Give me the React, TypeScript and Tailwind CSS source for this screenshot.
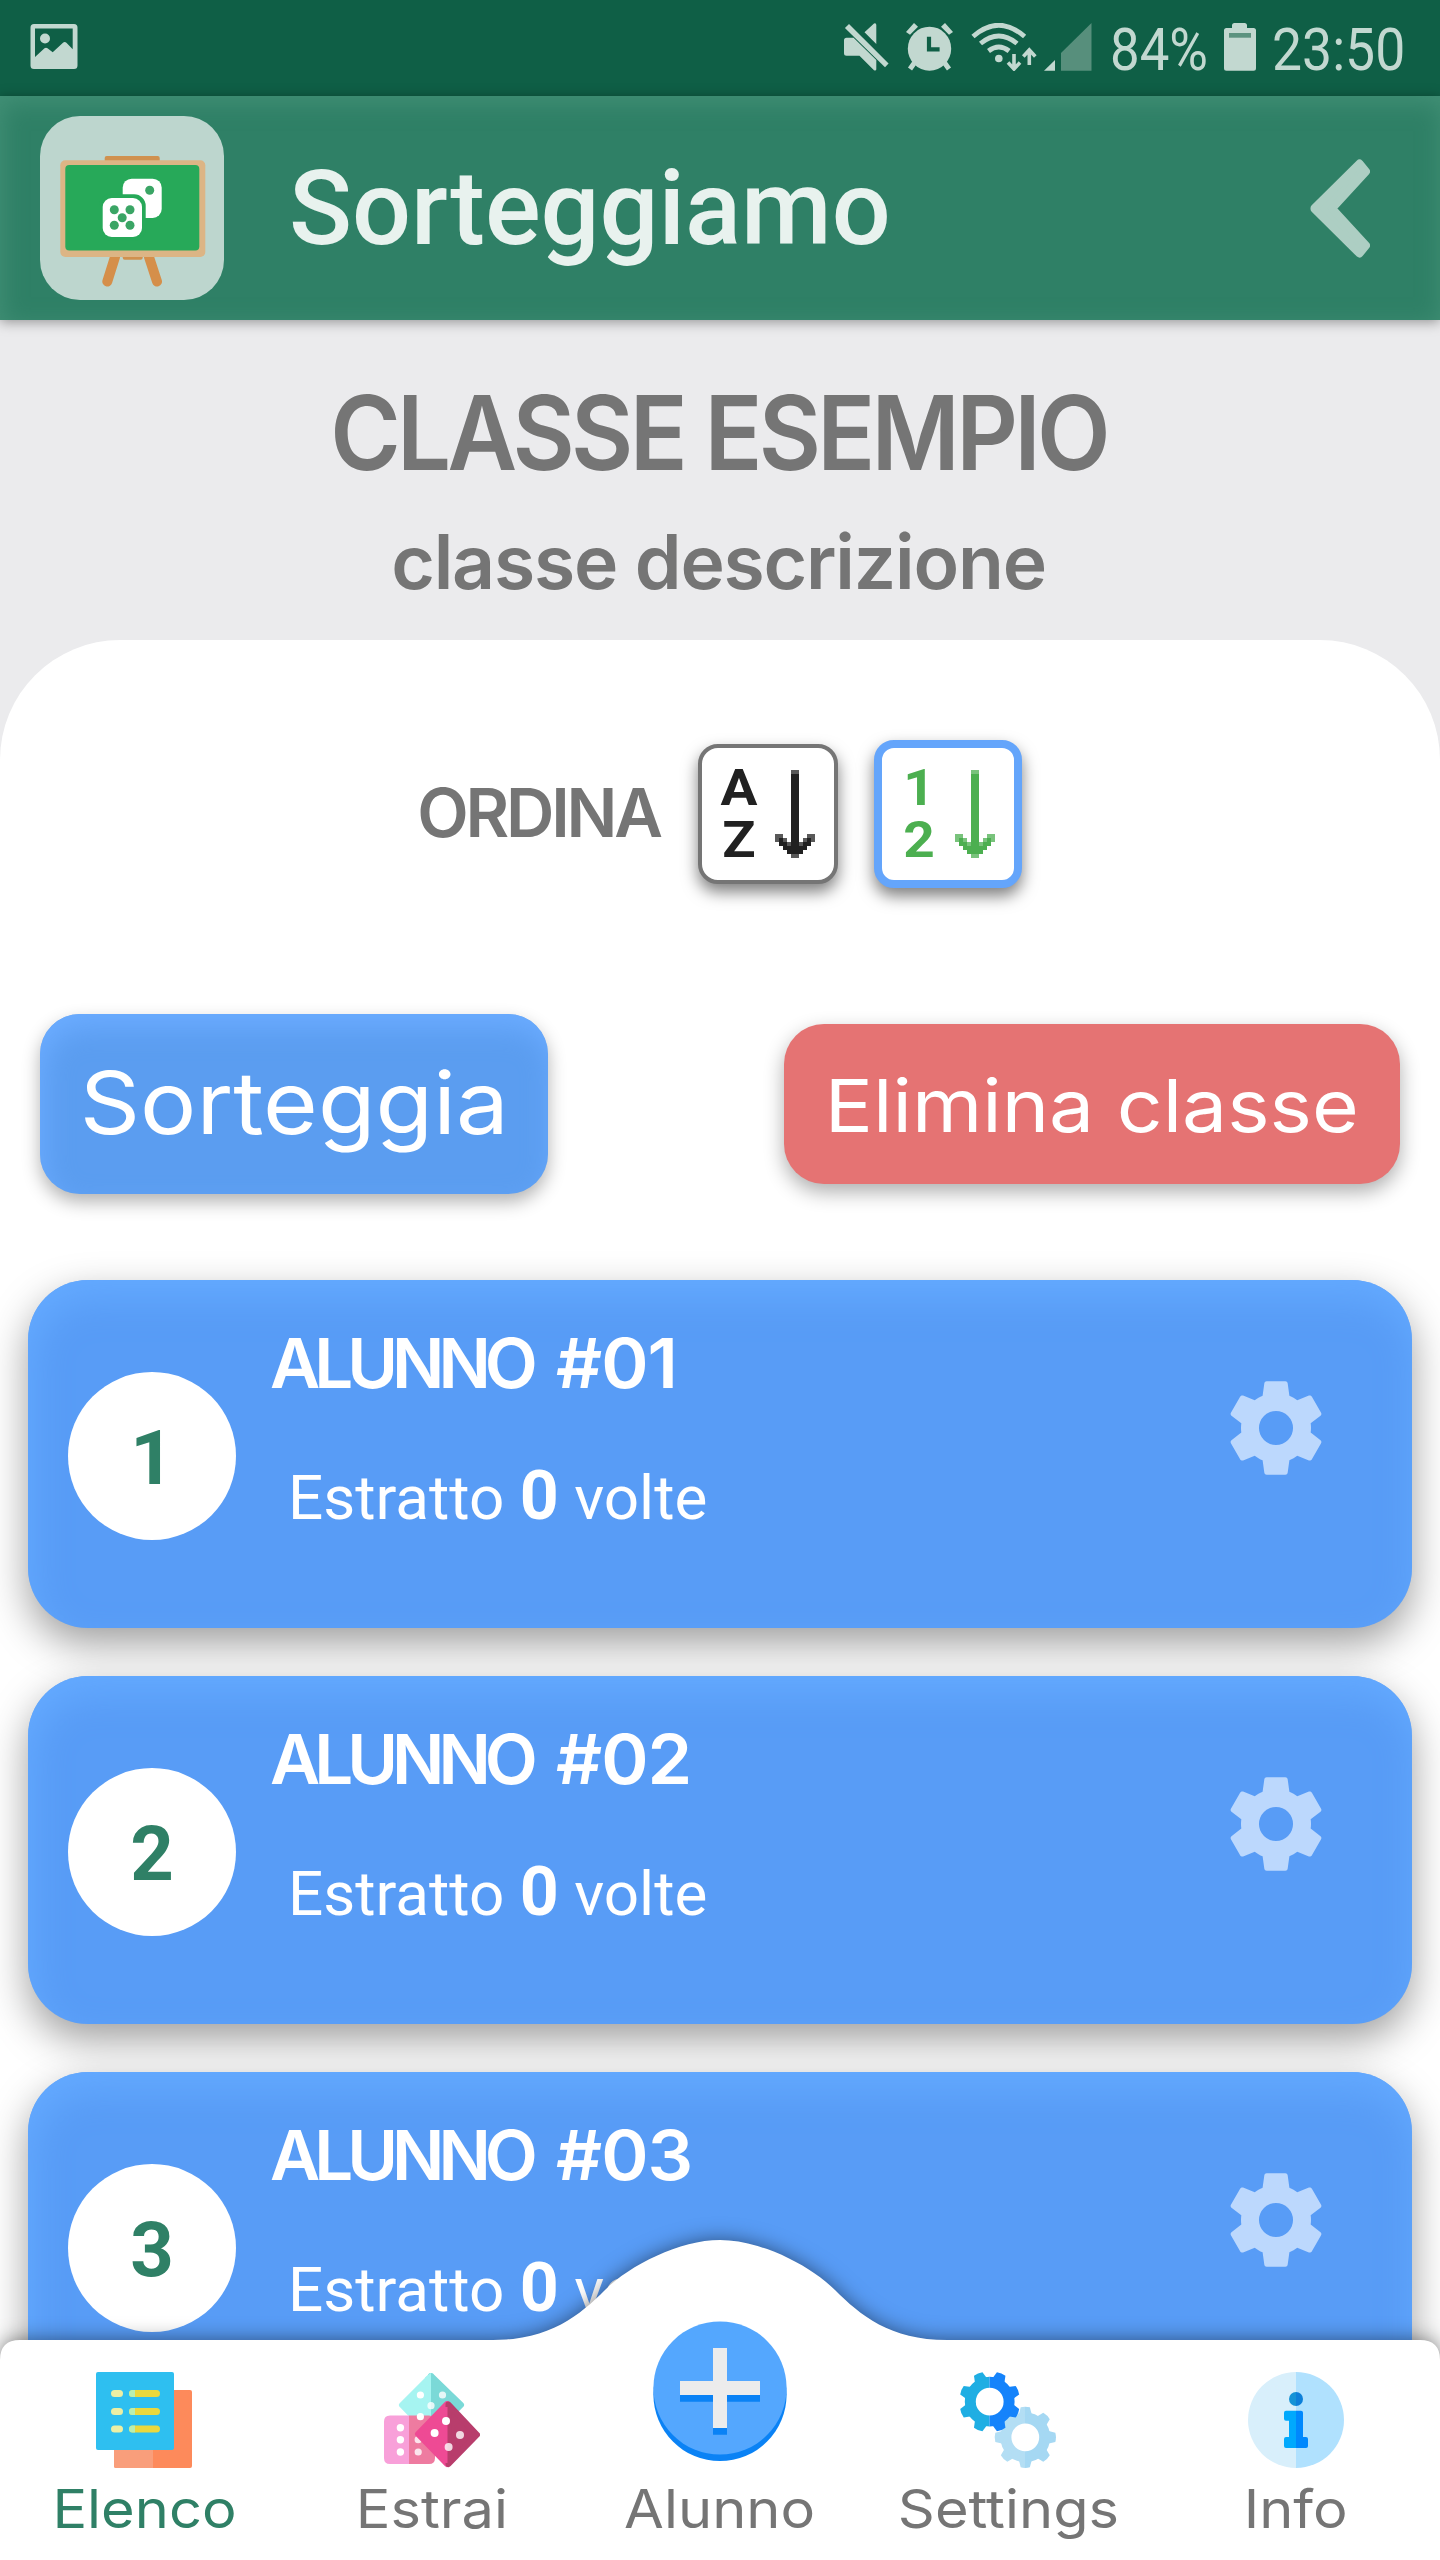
import type { ReactNode } from 'react'

interface StudentType {
    id : number
    code : string
    count : number
}

interface NavItemProps {
    label : string
    icon : ReactNode
    active? : boolean
}

const students : StudentType[] = [
    { id: 1, code: '#01', count: 0 },
    { id: 2, code: '#02', count: 0 },
    { id: 3, code: '#03', count: 0 },
]

// status bar
function StatusBar() {
    return (
        <div className="flex h-24 items-center justify-between bg-[#0f5f46] pl-[30px] pr-[34px] pb-0.5 text-[#c2d8d0]">
            <svg width="48" height="48" viewBox="0 0 48 48" fill="currentColor">
                <path fillRule="evenodd" d="M4 1h40a3.500 3.500 0 0 1 3.500 3.500v38a3.500 3.500 0 0 1-3.500 3.500H4A3.500 3.500 0 0 1 .5 42.500v-38A3.500 3.500 0 0 1 4 1ZM5 5.500V34l9.500-8.700q1.500-1.200 3 0l5.200 4L33 19.800q1.700-1.500 3.400 0l6.300 6.500V5.500Z" />
                <circle cx="15" cy="15.500" r="5" />
            </svg>

            <div className="flex items-center">
                {/* muted */}
                <svg className="mr-[17px]" width="45" height="48" viewBox="0 0 45 48" fill="currentColor">
                    <path d="M20.500 9.300 30 .5q2.300-.7 2.300 1.500v19ZM2.500 14.700h7L32.300 37v9.500q-.5 1.800-2.300.7L15.500 32.700h-13Q0 32.700 0 30.200v-13q0-2.500 2.500-2.500Z" />
                    <path d="M.9 5 5 1l39.600 39.500-3.600 3.800Z" />
                </svg>
                {/* alarm */}
                <svg className="mr-[17px]" width="48" height="48" viewBox="0 0 48 48" fill="currentColor">
                    <ellipse cx="23.500" cy="25.700" rx="21.700" ry="22" />
                    <path d="M0 9 8 0l4 3.800-8 8ZM47 9l-8-9-4 3.800 8 8Z" />
                    <path d="m9 39-5 7M38 39l5 7" stroke="currentColor" strokeWidth="5" />
                    <path d="M23 13.700v12.600h10.600" fill="none" stroke="#0f5f46" strokeWidth="4.200" />
                </svg>
                {/* wifi */}
                <svg className="mr-[7px]" width="66" height="48" viewBox="0 0 66 48" fill="none" stroke="currentColor">
                    <path d="M2 13.500Q27.800-9 53.600 13.500M9.500 20.500Q27.800 5.500 46 20.500M17.500 28q10.300-8 20.600 0" strokeWidth="4.800" />
                    <circle cx="27.800" cy="35.500" r="3.800" fill="currentColor" stroke="none" />
                    <path d="M43 31v14M37 39.500l6 6.500 6-6.500M58.300 42V28M52.300 33.500l6-6.500 6 6.500" strokeWidth="3.600" />
                </svg>
                {/* signal */}
                <svg className="mr-[18px]" width="48" height="48" viewBox="0 0 48 48">
                    <path d="M0 47.700 11 37v10.700Z" fill="#c2d8d0" />
                    <path d="M17 47.700V30L47.500 0v47.700Z" fill="#578f7c" />
                </svg>
                <div className="mr-[18px] w-24 origin-left scale-x-[0.88] whitespace-nowrap pt-1.5 font-['Roboto',sans-serif] text-[60px] leading-[64px]">84%</div>
                {/* battery */}
                <svg className="mr-4" width="32" height="48" viewBox="0 0 32 48" fill="currentColor">
                    <path d="M10.500 0h10q2.500 0 2.500 2.500V5h6.500Q32 5 32 7.500v37.700q0 2.500-2.500 2.500h-27Q0 47.700 0 45.200V7.500Q0 5 2.500 5H8V2.500Q8 0 10.500 0Z" />
                    <path d="M5 10h22v4.700H5Z" fill="#5c937f" />
                </svg>
                <div className="w-[134px] origin-left scale-x-[0.892] whitespace-nowrap pt-1.5 font-['Roboto',sans-serif] text-[60px] leading-[64px]">23:50</div>
            </div>
        </div>
    )
}

function Logo() {
    return (
        <svg className="rounded-[40px] bg-[#bdd6ce]" width="184" height="184" viewBox="0 0 184 184">
            <path d="M75 141 67.300 165.500M109 141l8 24.500" stroke="#d58f4a" strokeWidth="10" strokeLinecap="round" />
            <rect x="82.700" y="136" width="20" height="7.700" rx="2" fill="#d0914f" />
            <rect x="64.700" y="40" width="55" height="8" rx="2" fill="#d0914f" />
            <rect x="20.300" y="44.300" width="145" height="96.700" rx="5" fill="#dcb585" />
            <rect x="25.300" y="49" width="134" height="85.500" rx="4" fill="#27a959" />
            <rect x="82.700" y="62.700" width="39" height="39.300" rx="9" fill="#fff" />
            <circle cx="109.700" cy="74.300" r="4.500" fill="#3aa565" />
            <rect x="60.500" y="79.800" width="43.700" height="43.400" rx="10" fill="#27a959" stroke="#27a959" strokeWidth="3" />
            <rect x="62.700" y="82" width="39.300" height="39" rx="9" fill="#fff" />
            <g fill="#3aa565">
                <circle cx="74.300" cy="93.700" r="4.500" />
                <circle cx="90" cy="93.700" r="4.500" />
                <circle cx="82.200" cy="101.700" r="4.500" />
                <circle cx="74.300" cy="109.300" r="4.500" />
                <circle cx="90" cy="109.300" r="4.500" />
            </g>
        </svg>
    )
}

function Header() {
    return (
        <header className="relative z-10 flex h-56 items-center bg-[#2f8066] pl-10 pr-[70px] shadow-[0_2px_12px_rgba(0,0,0,0.38),inset_2px_6px_24px_rgba(80,155,130,0.6)]">
            <Logo />
            <h1 className="ml-[65px] grow pt-px font-['Roboto',sans-serif] text-[104px] leading-none font-medium text-[#e8f2ee]">Sorteggiamo</h1>
            <svg width="60" height="100" viewBox="0 0 60 100" fill="#adcec3" stroke="#adcec3" strokeWidth="8" strokeLinejoin="round">
                <path d="M4.500 50 49.500 5.500 56 13.500 22 50.500 56 87.500 49.500 95.500 4.500 51Z" />
            </svg>
        </header>
    )
}

// down arrow built from 4px cells
function PixelArrow() {
    return (
        <svg width="40" height="88" viewBox="0 0 10 22" fill="currentColor" shapeRendering="crispEdges">
            <path d="M4 1h2v20H4ZM1 17h1v1H1ZM2 18h1v1H2ZM1 18h2v1H1ZM2 19h6v1H2ZM3 20h4v1H3ZM7 18h2v1H7ZM8 17h1v1H8Z" />
            <path d="M4 0h2v1H4ZM0 16h2v1H0ZM8 16h2v1H8ZM0 17h1v1H0ZM9 17h1v1H9ZM2 17h1v1H2ZM7 17h1v1H7ZM3 18h1v1H3ZM6 18h1v1H6ZM4 21h2v1H4Z" opacity=".75" />
        </svg>
    )
}

function SortIcon({ top, bottom } : { top : string, bottom : string }) {
    return (
        <div className="flex items-center justify-center gap-[17px]">
            <div className="flex w-[38px] scale-x-110 flex-col pb-px text-center font-['Roboto',sans-serif] text-[50px] leading-[52px] font-bold">
                <span>{ top }</span>
                <span>{ bottom }</span>
            </div>
            <PixelArrow />
        </div>
    )
}

function GearIcon() {
    return (
        <svg width="112" height="112" viewBox="0 0 24 24" fill="#bcd8fd">
            <path d="M12,15.650A3.650,3.650 0 0,1 8.350,12A3.650,3.650 0 0,1 12,8.350A3.650,3.650 0 0,1 15.650,12A3.650,3.650 0 0,1 12,15.650M19.430,12.970C19.470,12.650 19.500,12.330 19.500,12C19.500,11.670 19.470,11.340 19.430,11L21.540,9.370C21.730,9.220 21.780,8.950 21.660,8.730L19.660,5.270C19.540,5.050 19.270,4.960 19.050,5.050L16.560,6.050C16.040,5.660 15.500,5.320 14.870,5.070L14.500,2.420C14.460,2.180 14.250,2 14,2H10C9.750,2 9.540,2.180 9.500,2.420L9.130,5.070C8.500,5.320 7.960,5.660 7.440,6.050L4.950,5.050C4.730,4.960 4.460,5.050 4.340,5.270L2.340,8.730C2.210,8.950 2.270,9.220 2.460,9.370L4.570,11C4.530,11.340 4.500,11.670 4.500,12C4.500,12.330 4.530,12.650 4.570,12.970L2.460,14.630C2.270,14.780 2.210,15.050 2.340,15.270L4.340,18.730C4.460,18.950 4.730,19.030 4.950,18.950L7.440,17.940C7.960,18.340 8.500,18.680 9.130,18.930L9.500,21.580C9.540,21.820 9.750,22 10,22H14C14.250,22 14.460,21.820 14.500,21.580L14.870,18.930C15.500,18.670 16.040,18.340 16.560,17.940L19.050,18.950C19.270,19.030 19.540,18.950 19.660,18.730L21.660,15.270C21.780,15.050 21.730,14.780 21.540,14.630L19.430,12.970Z" />
        </svg>
    )
}

function StudentCard({ student } : { student : StudentType }) {
    return (
        <div className="relative flex h-[348px] items-start rounded-[60px] bg-[#589cf6] pl-10 pr-20 text-white shadow-[0_16px_40px_rgba(0,0,0,0.38),inset_4px_18px_36px_#64aaff]">
            <div className="mt-[92px] flex size-[168px] items-center justify-center rounded-full bg-white pt-1 font-['Roboto',sans-serif] text-[76px] leading-none font-bold text-[#2f8066]">
                { student.id }
            </div>
            <div className="ml-[34px] grow pt-[43px]">
                <h3 className="font-['Inter',sans-serif] text-[69px] leading-[80px] font-semibold tracking-[-6px]">
                    ALUNNO <span className="ml-[13px] inline-block origin-left scale-x-[1.04] tracking-[-1px]">{ student.code }</span>
                </h3>
                <p className="mt-[53px] ml-[18px] font-['Roboto',sans-serif] text-[62px] leading-[80px]">
                    Estratto <b className="text-[68px] font-bold">{ student.count }</b> volte
                </p>
            </div>
            <div className="mt-[92px]">
                <GearIcon />
            </div>
        </div>
    )
}

// nav icons
function ListIcon() {
    const lines = [18, 36, 53.5]

    return (
        <svg width="96" height="96" viewBox="0 0 96 96">
            <rect x="18" y="18" width="78" height="78" rx="2" fill="#fd8a5b" />
            <path d="M57 78v18H20a2 2 0 0 1-2-2V78Z" fill="#f99e7b" />
            <rect width="78" height="78" rx="2" fill="#2ebff0" />
            { lines.map(y => (
                <g key={y}>
                    <rect x="15" y={y} width="12" height="7" rx="3.500" fill="#ecefa4" />
                    <rect x="33" y={y} width="31" height="7" rx="3.500" fill="#ead83d" />
                    <path d={`M39 ${y}h-2.500a3.500 3.500 0 0 0 0 7H39Z`} fill="#b9efb0" />
                </g>
            )) }
        </svg>
    )
}

function DiceIcon() {
    return (
        <svg width="96" height="96" viewBox="0 0 96 96" strokeLinejoin="round" strokeWidth="6">
            <path d="M47 4 18 33l29 30Z" fill="#a6f4f1" stroke="#a6f4f1" />
            <path d="M47 4l30 29-30 30Z" fill="#7bd9d7" stroke="#7bd9d7" />
            <path d="M47 .8V62h-6V5.500Z" fill="#a6f4f1" />
            <path d="M25 43.500V92H6q-6 0-6-6V49.500q0-6 6-6Z" fill="#f8a0d9" />
            <path d="M25 43.500h20q6 0 6 6V86q0 6-6 6H25Z" fill="#ee7ba0" />
            <circle cx="34.200" cy="67.700" r="3.600" fill="#fff" opacity=".8" />
            <path d="M63 32 34 62l29 30Z" fill="#ee4a94" stroke="#ee4a94" />
            <path d="M64.500 32.500 93 62.700 64.500 92Z" fill="#b83d6c" stroke="#b83d6c" />
            <path d="M58 35h5.500v56H58Z" fill="#ee4a94" />
            <g fill="#fff">
                <circle cx="36.400" cy="23" r="3.600" />
                <circle cx="36.400" cy="44.700" r="3.600" />
                <circle cx="16.400" cy="55.700" r="3.700" />
                <circle cx="16.400" cy="67.700" r="3.700" />
                <circle cx="16.400" cy="80" r="3.700" />
                <circle cx="62" cy="49" r="4" />
                <circle cx="50.600" cy="61" r="4" />
            </g>
            <g fill="#fff" opacity=".8">
                <circle cx="58.500" cy="23" r="3.600" />
                <circle cx="47" cy="33.700" r="3.600" />
                <circle cx="34.200" cy="80" r="3.600" />
                <circle cx="76" cy="63" r="4" />
                <circle cx="64.600" cy="75" r="4" />
            </g>
        </svg>
    )
}

function PlusIcon() {
    return (
        <svg width="160" height="160" viewBox="0 0 160 160">
            <circle cx="80" cy="86.500" r="66.600" fill="#0a82f5" />
            <circle cx="80" cy="80" r="66.600" fill="#54a7fe" />
            <path d="M73 46.700h14v80H73ZM40 79.700h80v14H40Z" fill="#0a82f5" />
            <path d="M73 40h14v80H73ZM40 73h80v14H40Z" fill="#ececec" />
        </svg>
    )
}

// one eight-toothed wheel, the ring is drawn as a stroke so the hole stays open
function Wheel({ cx, cy, turn, fill } : { cx : number, cy : number, turn : number, fill : string }) {
    const teeth = [0, 45, 90, 135, 180, 225, 270, 315]

    return (
        <g>
            <circle cx={cx} cy={cy} r="19.400" fill="none" stroke={fill} strokeWidth="11" />
            { teeth.map(angle => (
                <path
                    key={angle}
                    d={`M${cx - 6.5} ${cy - 22.5}L${cx - 4.6} ${cy - 30}Q${cx} ${cy - 31.3} ${cx + 4.6} ${cy - 30}L${cx + 6.5} ${cy - 22.5}Z`}
                    transform={`rotate(${angle + turn} ${cx} ${cy})`}
                    fill={fill}
                />
            )) }
        </g>
    )
}

function GearsIcon() {
    return (
        <svg width="96" height="96" viewBox="0 0 96 96">
            <defs>
                <clipPath id="front-left"><path d="M-5-5h34.500v110H-5Z" /></clipPath>
                <clipPath id="front-right"><path d="M29.500-5H100v110H29.500Z" /></clipPath>
                <clipPath id="back-left"><path d="M0 0h65v96H0Z" /></clipPath>
                <clipPath id="back-right"><path d="M65 0h35v96H65Z" /></clipPath>
            </defs>
            <g clipPath="url(#back-left)"><Wheel cx={65.3} cy={65.3} turn={0} fill="#b3def4" /></g>
            <g clipPath="url(#back-right)"><Wheel cx={65.3} cy={65.3} turn={0} fill="#a5d8f3" /></g>
            <g clipPath="url(#front-left)"><Wheel cx={29.7} cy={29.7} turn={22.5} fill="#1faee3" /></g>
            <g clipPath="url(#front-right)"><Wheel cx={29.7} cy={29.7} turn={22.5} fill="#1583fb" /></g>
        </svg>
    )
}

function InfoIcon() {
    return (
        <svg width="96" height="96" viewBox="0 0 96 96">
            <path d="M48 0a48 48 0 0 0 0 96Z" fill="#d8effb" />
            <path d="M48 0a48 48 0 0 1 0 96Z" fill="#b0e1fe" />
            <path d="M48 20a7 7 0 0 0 0 14Z" fill="#1593d6" />
            <path d="M48 20a7 7 0 0 1 0 14Z" fill="#0d7fd9" />
            <path d="M48 38.700H38q-2 0-2 2v6q0 2 2 2h3V65h-3q-2 0-2 2v7q0 2 2 2h10Z" fill="#00a9fd" />
            <path d="M48 38.700h5q2 0 2 2V65h3q2 0 2 2v7q0 2-2 2H48Z" fill="#0088fd" />
        </svg>
    )
}

function NavItem({ label, icon, active } : NavItemProps) {
    return (
        <div className="flex flex-col items-center justify-end pb-[19px]">
            { icon }
            <span className={`mt-[9px] scale-x-[1.09] font-['Inter',sans-serif] text-[53px] leading-[64px] ${active ? 'text-[#2f8066]' : 'text-[#757575]'}`}>
                { label }
            </span>
        </div>
    )
}

export default function App() {
    return (
        <div className="relative h-[2560px] w-[1440px] overflow-hidden bg-[#ebebed]">
            <StatusBar />
            <Header />

            {/* class name */}
            <div className="flex h-80 flex-col items-center pt-[61px] pr-[3px] font-['Inter',sans-serif] font-semibold text-[#757575]">
                <h2 className="scale-x-[0.93] text-[103px] leading-[104px] tracking-[-4px] whitespace-nowrap">CLASSE ESEMPIO</h2>
                <p className="mt-[37px] text-[75px] leading-[80px] tracking-[-1.2px]">classe descrizione</p>
            </div>

            <main className="rounded-t-[120px] bg-white pt-[100px] pb-20">
                {/* sort order */}
                <div className="flex h-[148px] items-center justify-center pr-px">
                    <span className="pb-1 font-['Inter',sans-serif] text-[67px] leading-none font-semibold tracking-[-3.2px] text-[#757575]">ORDINA</span>
                    <button className="ml-[38px] flex size-[140px] items-center justify-center rounded-[20px] border-4 border-[#757575] bg-white text-[#212121] shadow-[0_8px_16px_rgba(0,0,0,0.5)]">
                        <SortIcon top="A" bottom="Z" />
                    </button>
                    <button className="ml-9 flex size-[148px] items-center justify-center rounded-[20px] border-8 border-[#64a5fb] bg-white text-[#4caf50] shadow-[0_8px_16px_rgba(0,0,0,0.5)]">
                        <SortIcon top="1" bottom="2" />
                    </button>
                </div>

                {/* actions */}
                <div className="mt-[126px] flex h-[180px] items-center justify-between px-10 font-['Inter',sans-serif] text-white">
                    <button className="flex h-[180px] w-[508px] items-center justify-center rounded-[40px] bg-[#5b9df0] pb-0.5 text-[86px] leading-none shadow-[0_8px_18px_rgba(0,0,0,0.3),inset_4px_14px_28px_#6bacff]">
                        <span className="scale-x-[1.093]">Sorteggia</span>
                    </button>
                    <button className="flex h-40 w-[616px] items-center justify-center rounded-[40px] bg-[#e57373] pt-0.5 text-[73px] leading-none shadow-[0_8px_20px_rgba(0,0,0,0.32)]">
                        <span className="scale-x-[1.1] whitespace-nowrap">Elimina classe</span>
                    </button>
                </div>

                {/* students */}
                <div className="mt-[86px] flex flex-col gap-12 px-7">
                    { students.map(student => <StudentCard key={student.id} student={student} />) }
                </div>
            </main>

            {/* bottom navigation */}
            <nav className="absolute bottom-0 left-0 z-20 h-80 w-full">
                <svg className="absolute inset-0 drop-shadow-[0_0_10px_rgba(0,0,0,0.5)]" width="1440" height="320" viewBox="0 0 1440 320">
                    <path d="M0 320V120Q0 100 20 100H493C550 100 580 75 605 50S680 0 720 0 810 25 835 50 890 100 947 100H1420Q1440 100 1440 120V320Z" fill="#fff" />
                </svg>
                <div className="relative grid h-full grid-cols-5">
                    <NavItem label="Elenco" icon={<ListIcon />} active />
                    <NavItem label="Estrai" icon={<DiceIcon />} />
                    <NavItem label="Alunno" icon={<PlusIcon />} />
                    <NavItem label="Settings" icon={<GearsIcon />} />
                    <NavItem label="Info" icon={<InfoIcon />} />
                </div>
            </nav>
        </div>
    )
}
